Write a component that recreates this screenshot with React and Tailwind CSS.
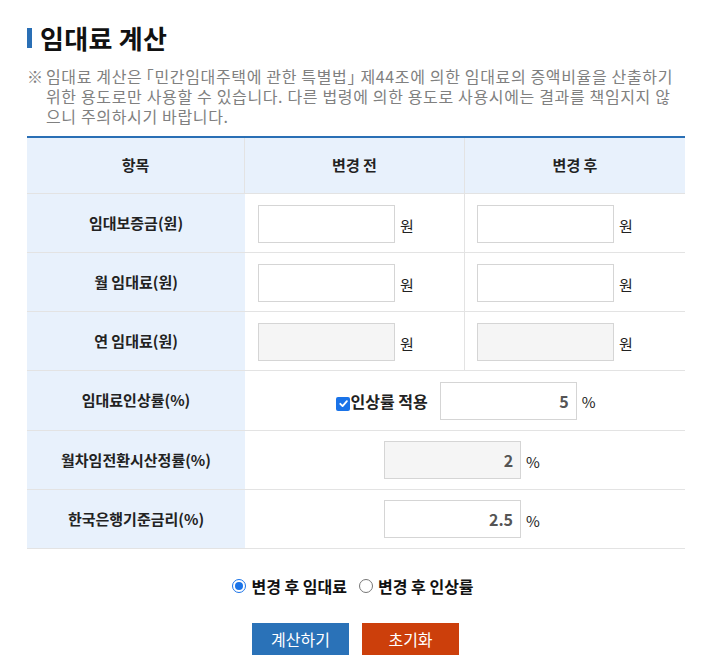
const font = { fontFamily: '"Noto Sans CJK KR", "Noto Sans", sans-serif' };

function Field({ gray, value, unit = "원", w = "w-[137px]" }) {
  return (
    <div className="flex items-center">
      <div
        className={`${w} h-[38px] border border-[#d5d5d5] ${gray ? "bg-[#f5f5f5]" : "bg-white"} flex items-center justify-end pr-[7px] text-[16px] font-bold text-[#555]`}
      >
        {value}
      </div>
      <span className="ml-[5px] mt-[4px] text-[15px] text-[#222]">{unit}</span>
    </div>
  );
}

function Label({ children }) {
  return (
    <div className="bg-[#e8f1fc] flex items-center justify-center text-[15px] font-bold text-[#222] border-b border-[#e3e3e3]">
      {children}
    </div>
  );
}

export default function App() {
  const rows = [
    { label: "임대보증금(원)", gray: false },
    { label: "월 임대료(원)", gray: false },
    { label: "연 임대료(원)", gray: true },
  ];

  return (
    <div className="bg-white min-h-[671px] w-[713px] pl-[27px] pr-[28px] pt-[24px]" style={font}>
      {/* title */}
      <div className="flex items-center gap-[8px] h-[28px]">
        <span className="w-[5px] h-[20px] bg-[#2a6fb5]" />
        <h2 className="text-[26px] font-bold text-[#111] leading-none tracking-[0.3px]">임대료 계산</h2>
      </div>

      {/* note */}
      <div className="mt-[14px] flex text-[16px] leading-[20px] text-[#808080] tracking-[0.65px] whitespace-nowrap">
        <span className="w-[19px] shrink-0 tracking-normal">※</span>
        <p>
          임대료 계산<span className="tracking-[-4px]">은</span>「민간임대주택에 관한 특별법<span className="tracking-[-3px]">」</span>제44조에 의한 임대료의 증액비율을 산출하기
          <br />
          위한 용도로만 사용할 수 있습니다. 다른 법령에 의한 용도로 사용시에는 결과를 책임지지 않
          <br />
          으니 주의하시기 바랍니다.
        </p>
      </div>

      {/* table */}
      <div className="mt-[10px] border-t-2 border-[#2a6fb5] grid grid-cols-[218px_220px_220px]">
        {/* header */}
        <div className="h-[56px] bg-[#e8f1fc] flex items-center justify-center text-[15px] font-bold text-[#222] border-b border-r border-[#e3e3e3]">
          항목
        </div>
        <div className="h-[56px] bg-[#e8f1fc] flex items-center justify-center text-[15px] font-bold text-[#222] border-b border-r border-[#e3e3e3]">
          변경 전
        </div>
        <div className="h-[56px] bg-[#e8f1fc] flex items-center justify-center text-[15px] font-bold text-[#222] border-b border-[#e3e3e3]">
          변경 후
        </div>

        {rows.map((r) => (
          <div key={r.label} className="contents">
            <Label>{r.label}</Label>
            <div className="h-[59px] flex items-center pl-[13px] pt-[2px] border-b border-r border-[#e3e3e3]">
              <Field gray={r.gray} />
            </div>
            <div className="h-[59px] flex items-center pl-[12px] pt-[2px] border-b border-[#e3e3e3]">
              <Field gray={r.gray} />
            </div>
          </div>
        ))}

        <Label>임대료인상률(%)</Label>
        <div className="col-span-2 h-[60px] flex items-center justify-center border-b border-[#e3e3e3] pl-[2px]">
          <label className="flex items-center mr-[12px]">
            <span className="w-[14px] h-[14px] rounded-[2px] bg-[#1a73e8] flex items-center justify-center mt-[6px]">
              <svg width="11" height="11" viewBox="0 0 12 12">
                <path d="M2.5 6.3 L5 8.8 L9.7 3.4" stroke="white" strokeWidth="2" fill="none" strokeLinecap="round" strokeLinejoin="round" />
              </svg>
            </span>
            <span className="text-[16px] font-bold text-[#222]">인상률 적용</span>
          </label>
          <Field value="5" unit="%" />
        </div>

        <Label>월차임전환시산정률(%)</Label>
        <div className="col-span-2 h-[59px] flex items-center justify-center border-b border-[#e3e3e3] pr-[6px]">
          <Field gray value="2" unit="%" />
        </div>

        <Label>한국은행기준금리(%)</Label>
        <div className="col-span-2 h-[59px] flex items-center justify-center border-b border-[#e3e3e3] pr-[6px]">
          <Field value="2.5" unit="%" />
        </div>
      </div>

      {/* radios */}
      <div className="mt-[25px] flex items-center justify-center gap-[12px] pr-[6px] text-[16px] font-bold text-[#111]">
        <label className="flex items-center gap-[5px]">
          <span className="w-[14px] h-[14px] rounded-full border-[1.5px] border-[#1a73e8] flex items-center justify-center">
            <span className="w-[8px] h-[8px] rounded-full bg-[#1a73e8]" />
          </span>
          변경 후 임대료
        </label>
        <label className="flex items-center gap-[5px]">
          <span className="w-[14px] h-[14px] rounded-full border border-[#767676] bg-white" />
          변경 후 인상률
        </label>
      </div>

      {/* buttons */}
      <div className="mt-[25px] flex justify-center gap-[13px] pr-[1px]">
        <button className="w-[97px] h-[32px] bg-[#2a72b8] text-white text-[16px]">계산하기</button>
        <button className="w-[97px] h-[32px] bg-[#cc3f0b] text-white text-[16px]">초기화</button>
      </div>
    </div>
  );
}
